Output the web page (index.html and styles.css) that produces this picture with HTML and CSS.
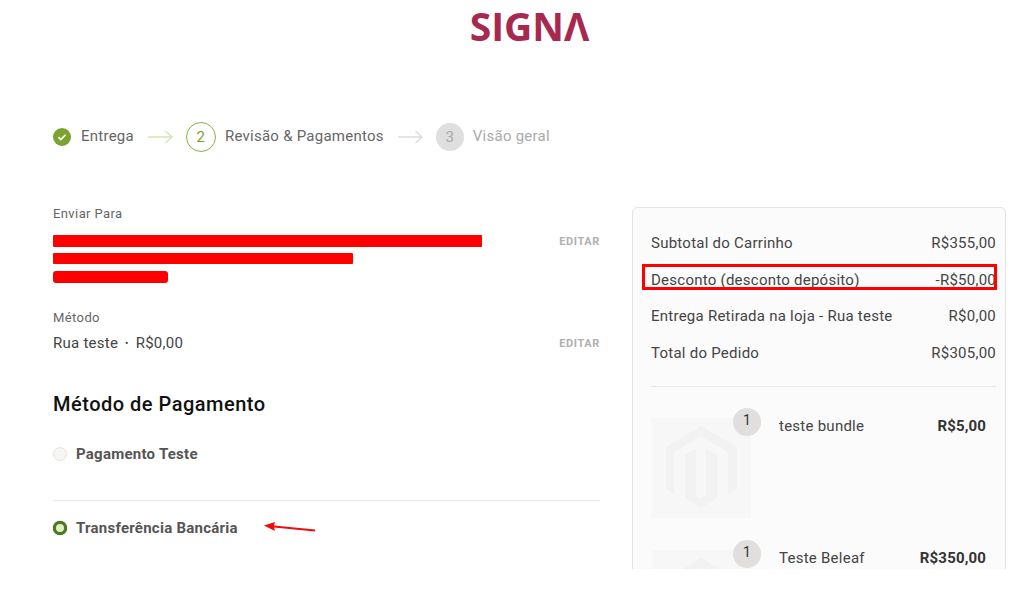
FILE: index.html
```html
<!DOCTYPE html>
<html lang="pt-BR">
<head>
  <meta charset="UTF-8" />
  <title>Checkout</title>
  <link rel="stylesheet" href="styles.css">
</head>
<body>
  <div class="page">
    <header class="logo">SIGNΛ</header>

    <!-- Steps -->
    <div class="steps">
      <svg class="step-check" width="18" height="18" viewBox="0 0 18 18">
        <circle cx="9" cy="9" r="9" fill="#7aa32f"/>
        <path d="M5.4 9.2l2.5 2.4 4.6-4.8" fill="none" stroke="#fff" stroke-width="1.6"/>
      </svg>
      <span class="step-label">Entrega</span>
      <svg class="step-arrow" width="26" height="14" viewBox="0 0 26 14">
        <path d="M0 7h24M17.500 1l6.500 6-6.500 6" fill="none" stroke="#d3e3ae" stroke-width="1.300"/>
      </svg>
      <span class="step-num current">2</span>
      <span class="step-label">Revisão &amp; Pagamentos</span>
      <svg class="step-arrow" width="26" height="14" viewBox="0 0 26 14">
        <path d="M0 7h24M17.500 1l6.500 6-6.500 6" fill="none" stroke="#dcdcdc" stroke-width="1.300"/>
      </svg>
      <span class="step-num todo">3</span>
      <span class="step-label muted">Visão geral</span>
    </div>

    <div class="columns">
      <main class="main-col">
        <div class="ship-block">
          <div class="ship-info">
            <div class="ship-title">Enviar Para</div>
            <div class="redact r1"></div>
            <div class="redact r2"></div>
            <div class="redact r3"></div>
          </div>
          <a class="edit">EDITAR</a>
        </div>

        <div class="ship-block method">
          <div class="ship-info">
            <div class="ship-title">Método</div>
            <div class="method-value">Rua teste <span class="dot">•</span> R$0,00</div>
          </div>
          <a class="edit">EDITAR</a>
        </div>

        <h2 class="pay-title">Método de Pagamento</h2>

        <div class="pay-option first">
          <span class="radio"></span>
          <span class="pay-label">Pagamento Teste</span>
        </div>
        <div class="pay-option second">
          <span class="radio checked"></span>
          <span class="pay-label">Transferência Bancária</span>
          <svg class="note-arrow" width="52" height="12" viewBox="0 0 52 12">
            <path d="M0 3.500L11 0 10 3.500 51 7.500V9.500L10 5.500 11 9z" fill="#f00a0a"/>
          </svg>
        </div>
      </main>

      <aside class="summary">
        <div class="row">Subtotal do Carrinho<span>R$355,00</span></div>
        <div class="row marked">Desconto (desconto depósito)<span>-R$50,00</span></div>
        <div class="row">Entrega Retirada na loja - Rua teste<span>R$0,00</span></div>
        <div class="row">Total do Pedido<span>R$305,00</span></div>

        <div class="items">
          <div class="item">
            <div class="thumb">
              <svg width="100" height="100" viewBox="0 0 100 100">
                <path d="M50 8L86 29V71L77 76V34L50 18 23 34V76L15 71V29zM34 37L45 31V77L50 80 55 77V31L66 37V80L50 90 34 80z" fill="#f2f2f2"/>
              </svg>
              <span class="qty">1</span>
            </div>
            <div class="item-name">teste bundle</div>
            <div class="item-price">R$5,00</div>
          </div>
          <div class="item">
            <div class="thumb">
              <svg width="100" height="100" viewBox="0 0 100 100">
                <path d="M50 8L86 29V71L77 76V34L50 18 23 34V76L15 71V29zM34 37L45 31V77L50 80 55 77V31L66 37V80L50 90 34 80z" fill="#f2f2f2"/>
              </svg>
              <span class="qty">1</span>
            </div>
            <div class="item-name">Teste Beleaf</div>
            <div class="item-price">R$350,00</div>
          </div>
        </div>
      </aside>
    </div>
  </div>
</body>
</html>
```

FILE: styles.css
```css
* { box-sizing: border-box; margin: 0; padding: 0; }
body {
  font-family: Roboto, sans-serif;
  background: #fff;
  color: #444;
  overflow: hidden;
}
.page {
  height: 569px;
  overflow: hidden;
  padding: 0 21px 0 53px;
}
.logo {
  height: 122px;
  padding-top: 2px;
  text-align: center;
  font-family: "Open Sans", sans-serif;
  font-size: 39px;
  line-height: 48px;
  font-weight: 700;
  color: #a8294f;
}

/* Steps */
.steps {
  display: flex;
  align-items: center;
  height: 30px;
  font-size: 15px;
  letter-spacing: 0.25px;
}
.step-check { margin-right: 10px; }
.step-label { color: #666; position: relative; top: -1px; }
.step-label.muted { color: #aaa; }
.step-arrow { margin: 0 12px 0 14px; }
.step-num {
  width: 30px;
  height: 30px;
  border-radius: 50%;
  display: flex;
  align-items: center;
  justify-content: center;
  margin-right: 9px;
  font-size: 15px;
}
.step-num.current { border: 1px solid #8cb040; color: #7aa32f; }
.step-num.todo { width: 28px; height: 28px; margin-right: 9px; background: #dfdfdf; color: #aaa; }

.columns {
  display: flex;
  gap: 32px;
  margin-top: 55px;
}

/* Left column */
.main-col { width: 547px; flex: none; }
.ship-block {
  display: flex;
  justify-content: space-between;
}
.ship-title {
  font-size: 13px;
  letter-spacing: 0.4px;
  color: #666;
  line-height: 14px;
}
.redact { background: #f00; border-radius: 1px; }
.r1 { width: 429px; height: 12px; margin-top: 14px; }
.r2 { width: 300px; height: 11px; margin-top: 6px; }
.r3 { width: 115px; height: 12px; margin-top: 7px; border-radius: 3px; }
.edit {
  font-size: 11px;
  font-weight: 700;
  letter-spacing: 0.6px;
  color: #b0b0b0;
  margin-top: 29px;
  line-height: 12px;
}
.method { margin-top: 28px; }
.method .edit { margin-top: 27px; }
.method-value {
  font-size: 15px;
  letter-spacing: 0.25px;
  color: #444;
  margin-top: 10px;
  line-height: 17px;
}
.dot { font-size: 10px; margin: 0 3px; position: relative; top: -1px; }
.pay-title {
  font-size: 20px;
  font-weight: 500;
  color: #111;
  letter-spacing: 0.5px;
  line-height: 24px;
  margin-top: 39px;
}
.pay-option {
  display: flex;
  align-items: center;
  gap: 9px;
}
.pay-option.first {
  margin-top: 29px;
  height: 18px;
}
.pay-option.second {
  margin-top: 37px;
  padding-top: 9px;
  height: 36px;
  border-top: 1px solid #e8e8e8;
  box-sizing: content-box;
}
.radio {
  width: 14px;
  height: 14px;
  border-radius: 50%;
  background: #f6f6f4;
  border: 1px solid #e3e3e3;
}
.radio.checked {
  background: #e2efc6;
  border: 3px solid #4e7a1e;
  box-shadow: 0 0 1px #333;
}
.pay-label {
  font-size: 15px;
  font-weight: 700;
  letter-spacing: 0.25px;
  color: #555;
}
.note-arrow { margin-left: 17px; }

/* Summary */
.summary {
  width: 374px;
  flex: none;
  height: 400px;
  background: #fbfbfb;
  border: 1px solid #e4e4e4;
  border-radius: 5px;
  padding: 17px 9px 0 18px;
}
.row {
  display: flex;
  justify-content: space-between;
  font-size: 15px;
  letter-spacing: 0.25px;
  line-height: 36.500px;
  height: 36.500px;
  color: #444;
}
.row.marked { position: relative; }
.row.marked::after {
  content: "";
  position: absolute;
  left: -9px;
  right: -1px;
  top: 2px;
  bottom: 8px;
  border: 3px solid #f00;
}
.items {
  margin-top: 15px;
  border-top: 1px solid #e8e8e8;
  padding-top: 31px;
}
.item {
  display: flex;
  align-items: flex-start;
  height: 132px;
  padding-right: 10px;
}
.thumb {
  position: relative;
  width: 100px;
  height: 100px;
  background: #f7f7f7;
  flex: none;
}
.thumb svg { display: block; }
.qty {
  position: absolute;
  top: -10px;
  right: -10px;
  width: 28px;
  height: 28px;
  border-radius: 50%;
  background: #e0dfdd;
  color: #333;
  font-size: 14px;
  text-align: center;
  line-height: 25px;
}
.item-name {
  flex: 1;
  margin-left: 28px;
  font-size: 15px;
  letter-spacing: 0.25px;
  color: #444;
  line-height: 17px;
}
.item-price {
  font-size: 15px;
  font-weight: 700;
  letter-spacing: 0.15px;
  color: #333;
  line-height: 17px;
}
```
